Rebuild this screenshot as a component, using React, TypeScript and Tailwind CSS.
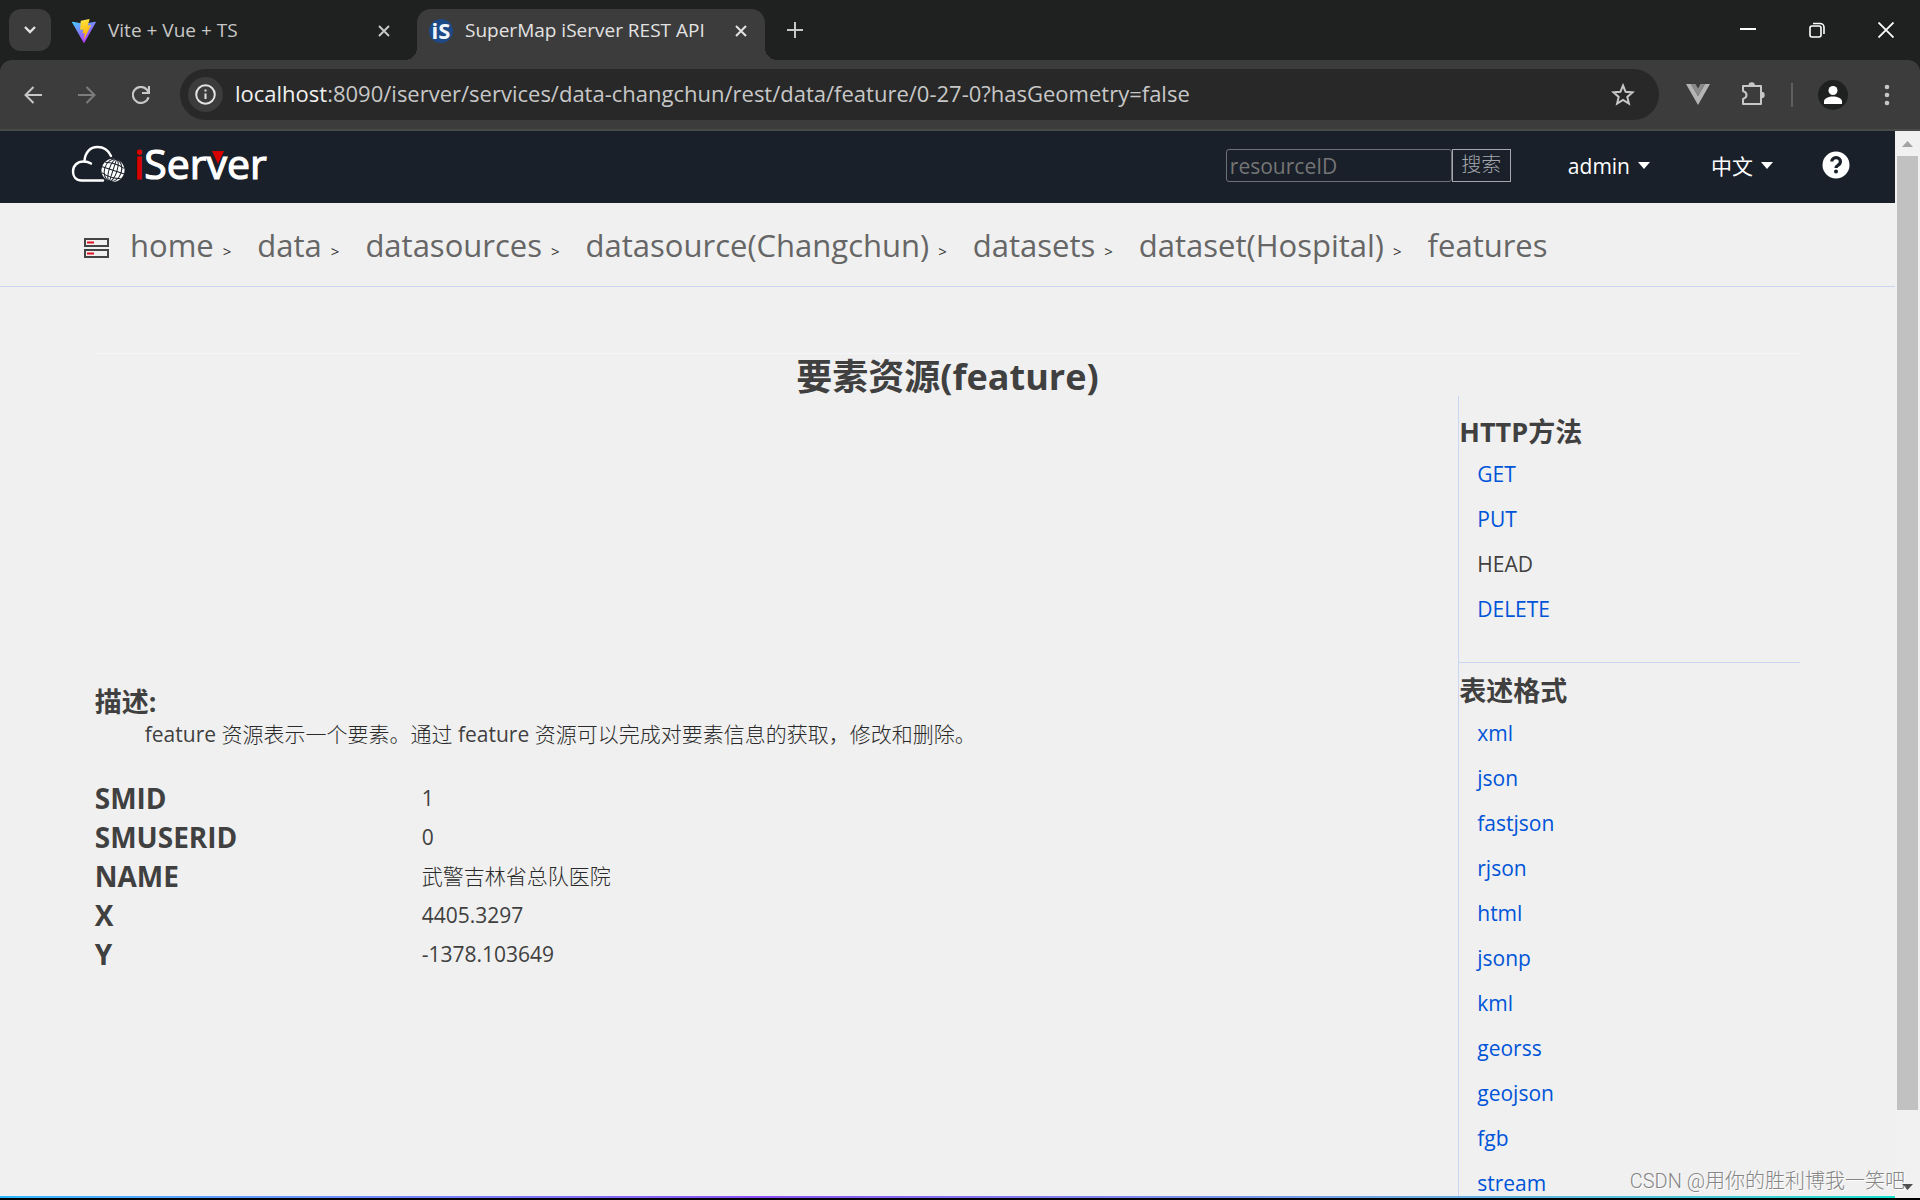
import React from 'react';

interface LinkItem {
  label: string;
  disabled?: boolean;
}

interface FieldItem {
  name: string;
  value: string;
  light?: boolean;
}

const crumbs = [
  'home',
  'data',
  'datasources',
  'datasource(Changchun)',
  'datasets',
  'dataset(Hospital)',
  'features',
];

const methods: LinkItem[] = [
  { label: 'GET' },
  { label: 'PUT' },
  { label: 'HEAD', disabled: true },
  { label: 'DELETE' },
];

const formats: LinkItem[] = [
  { label: 'xml' },
  { label: 'json' },
  { label: 'fastjson' },
  { label: 'rjson' },
  { label: 'html' },
  { label: 'jsonp' },
  { label: 'kml' },
  { label: 'georss' },
  { label: 'geojson' },
  { label: 'fgb' },
  { label: 'stream' },
];

const fields: FieldItem[] = [
  { name: 'SMID', value: '1' },
  { name: 'SMUSERID', value: '0' },
  { name: 'NAME', value: '武警吉林省总队医院', light: true },
  { name: 'X', value: '4405.3297' },
  { name: 'Y', value: '-1378.103649' },
];

const CloseIcon: React.FC = () => (
  <svg className="w-3 h-3" viewBox="0 0 12 12" fill="none" stroke="currentColor" strokeWidth="2">
    <path d="M1 1l10 10M11 1L1 11" />
  </svg>
);

const ViteIcon: React.FC = () => (
  <svg className="w-6 h-6 shrink-0" viewBox="0 0 24 24">
    <defs>
      <linearGradient id="viteBody" x1="0" y1="0" x2="0.6" y2="1">
        <stop offset="0" stopColor="#41d1ff" />
        <stop offset="1" stopColor="#bd34fe" />
      </linearGradient>
      <linearGradient id="viteBolt" x1="0.4" y1="0" x2="0.6" y2="1">
        <stop offset="0" stopColor="#ffea83" />
        <stop offset="0.1" stopColor="#ffdd35" />
        <stop offset="1" stopColor="#ffa800" />
      </linearGradient>
    </defs>
    <path d="M23.8 3.6L12.5 23.6a.6.6 0 0 1-1 0L.1 3.6a.6.6 0 0 1 .6-.9L12 4.7l11.2-2a.6.6 0 0 1 .6.9z" fill="url(#viteBody)" />
    <path d="M17.3.1L9 1.7a.3.3 0 0 0-.3.3l-.5 8.6c0 .2.2.4.4.3l2.3-.5c.2 0 .4.2.4.4l-.7 3.3c0 .3.2.5.4.4l1.4-.4c.3-.1.5.1.4.4l-1.1 5.2c-.1.4.4.5.5.2l.1-.2L19 6.4c.1-.2-.1-.5-.4-.4l-2.4.4c-.2.1-.4-.2-.3-.4l1.7-5.5c0-.2-.1-.4-.3-.4z" fill="url(#viteBolt)" />
  </svg>
);

const SuperMapIcon: React.FC = () => (
  <svg className="w-6 h-6 shrink-0 overflow-visible" viewBox="0 0 24 24">
    <circle cx="12" cy="12" r="12" fill="#1d4a86" />
    <text x="12" y="20" textAnchor="middle" fill="#f2f6fb" className="font-bold text-[22px]">
      iS
    </text>
  </svg>
);

const Logo: React.FC = () => (
  <svg className="w-[200px] h-[44px] overflow-visible" viewBox="0 0 200 44" role="img" aria-label="iServer">
    <g fill="none" stroke="#fff" strokeWidth="2.4" strokeLinecap="round">
      <path d="M33 39.5H11.5C6 39.5 3 35.5 3 30.5c0-6 4.5-10 10.5-10 3 0 5.5.7 7.5 2" />
      <path d="M14.5 20C15 11.5 20 6 27.5 6c6.500 0 11 3.5 13.500 9" />
    </g>
    <circle cx="43" cy="29.3" r="11.5" fill="#fff" />
    <g fill="none" stroke="#1a202a" strokeWidth="1" transform="rotate(18 43 29.3)">
      <ellipse cx="43" cy="29.3" rx="4" ry="11.5" />
      <ellipse cx="43" cy="29.3" rx="8.5" ry="11.5" />
      <path d="M43 18v23M31 29.3h24M33 24q10-3 20 0M33 35q10 3 20 0" />
    </g>
    <text x="64" y="38" className="text-[41px]" fill="#fff" stroke="#fff" strokeWidth="1.2">
      <tspan fill="#d90000" stroke="#d90000">i</tspan>Server
    </text>
    <path d="M142 10h12l-6 13z" fill="#d90000" />
  </svg>
);

const Caret: React.FC = () => (
  <svg className="w-3 h-[7px] mb-1" viewBox="0 0 12 7" fill="currentColor">
    <path d="M0 0h12L6 7z" />
  </svg>
);

const TabStrip: React.FC = () => (
  <div className="flex h-[60px] items-end bg-[#1f2120] text-[19px] text-[#c7c7c7]">
    <button
      aria-label="Search tabs"
      className="ml-[9px] mb-[9px] flex h-[42px] w-[42px] items-center justify-center rounded-xl bg-[#3c3c3c] text-[#e3e3e3]"
    >
      <svg className="w-3 h-2" viewBox="0 0 12 8" fill="none" stroke="currentColor" strokeWidth="2.4">
        <path d="M1 1l5 5 5-5" />
      </svg>
    </button>
    <div className="flex h-[51px] w-[366px] items-center gap-3 pb-2 pl-[21px] pr-[27px]">
      <ViteIcon />
      <span className="flex-1">Vite + Vue + TS</span>
      <button aria-label="Close tab">
        <CloseIcon />
      </button>
    </div>
    <div className="relative flex h-[51px] w-[348px] items-center gap-3 rounded-t-[14px] bg-[#3c3c3c] pb-2 pl-3 pr-[18px] text-[#e3e3e3]">
      {/* Curvas exteriores de la pestaña activa */}
      <span className="absolute -left-3 bottom-0 h-3 w-3 bg-[radial-gradient(circle_at_0_0,#1f2120_12px,#3c3c3c_12px)]" />
      <span className="absolute -right-3 bottom-0 h-3 w-3 bg-[radial-gradient(circle_at_100%_0,#1f2120_12px,#3c3c3c_12px)]" />
      <SuperMapIcon />
      <span className="flex-1 whitespace-nowrap">SuperMap iServer REST API</span>
      <button aria-label="Close tab">
        <CloseIcon />
      </button>
    </div>
    <button aria-label="New tab" className="mb-[22px] ml-[22px]">
      <svg className="w-4 h-4" viewBox="0 0 16 16" stroke="currentColor" strokeWidth="2">
        <path d="M8 0v16M0 8h16" />
      </svg>
    </button>
    <div className="mb-[22px] ml-auto mr-[26px] flex items-center gap-[53px] text-white">
      <button aria-label="Minimize">
        <svg className="w-4 h-4" viewBox="0 0 16 16" stroke="currentColor" strokeWidth="2">
          <path d="M0 7h16" />
        </svg>
      </button>
      <button aria-label="Restore">
        <svg className="w-4 h-4" viewBox="0 0 16 16" fill="none" stroke="currentColor" strokeWidth="1.6">
          <rect x="1" y="4" width="11" height="11" rx="2" />
          <path d="M4 1.5h7a4 4 0 0 1 4 4V12" />
        </svg>
      </button>
      <button aria-label="Close">
        <svg className="w-4 h-4" viewBox="0 0 16 16" stroke="currentColor" strokeWidth="1.8">
          <path d="M.5.5l15 15M15.5.5l-15 15" />
        </svg>
      </button>
    </div>
  </div>
);

const Toolbar: React.FC = () => (
  <div className="bg-[#1f2120]">
    <div className="flex h-[71px] items-center rounded-t-xl border-b-2 border-[#474a47] bg-[#3c3c3c] pl-6 pr-[30px] text-[#c7c7c7]">
      <div className="flex w-[156px] items-center gap-9">
        <button aria-label="Back">
          <svg className="w-[18px] h-[18px]" viewBox="0 0 18 18" fill="none" stroke="currentColor" strokeWidth="2">
            <path d="M18 9H1.5M9.5 1L1.5 9l8 8" />
          </svg>
        </button>
        <button aria-label="Forward" className="text-[#7c7c7c]">
          <svg className="w-[18px] h-[18px]" viewBox="0 0 18 18" fill="none" stroke="currentColor" strokeWidth="2">
            <path d="M0 9h16.5M8.5 1l8 8-8 8" />
          </svg>
        </button>
        <button aria-label="Reload">
          <svg className="w-[18px] h-[18px]" viewBox="0 0 18 18" fill="none" stroke="currentColor" strokeWidth="2.2">
            <path d="M16.5 11.2A8 8 0 1 1 15 3.8l1.5 2" />
            <path d="M17 0v7h-7" />
          </svg>
        </button>
      </div>
      <div className="flex h-[51px] flex-1 items-center rounded-full bg-[#282828] pl-2 pr-6">
        <button aria-label="Site information" className="flex h-[35px] w-[35px] items-center justify-center rounded-full bg-[#3c3c3c] text-[#e3e3e3]">
          <svg className="w-[21px] h-[21px]" viewBox="0 0 21 21" fill="none" stroke="currentColor" strokeWidth="2">
            <circle cx="10.5" cy="10.5" r="9.3" />
            <path d="M10.5 9.5V15M10.5 5.5v2" />
          </svg>
        </button>
        <div className="ml-3 flex-1 whitespace-nowrap pb-[2px] text-[22px]">
          <span className="text-[#f0f0f0]">localhost</span>
          :8090/iserver/services/data-changchun/rest/data/feature/0-27-0?hasGeometry=false
        </div>
        <button aria-label="Bookmark">
          <svg className="w-6 h-6" viewBox="0 0 24 24" fill="none" stroke="currentColor" strokeWidth="2">
            <path d="M12 2.5l2.6 6.3 6.9.6-5.2 4.5 1.6 6.7L12 17l-5.9 3.6 1.6-6.7L2.5 9.4l6.9-.6z" />
          </svg>
        </button>
      </div>
      <div className="ml-[27px] flex items-center">
        <svg className="w-6 h-[21px]" viewBox="0 0 24 21">
          <path d="M0 0h5l7 12 7-12h5L12 21z" fill="#b4b4b4" />
          <path d="M5 0h4.5L12 4.5 14.5 0H19l-7 12z" fill="#8a8a8a" />
        </svg>
        <button aria-label="Extensions" className="mb-[2px] ml-[31px]">
          <svg className="w-6 h-6" viewBox="0 0 24 24" fill="none" stroke="currentColor" strokeWidth="2" strokeLinejoin="round">
            <path d="M2 4h18v18H2v-5q3.5-1.2 3.5-4T2 9z" />
            <path d="M7.5 3.500a3.200 3.200 0 0 1 6.400 0zM20.500 9.800a3.200 3.200 0 0 1 0 6.400z" fill="currentColor" stroke="none" />
          </svg>
        </button>
        <span className="ml-[26px] h-6 w-[2px] bg-[#5f5f5f]" />
        <button aria-label="Profile" className="ml-[25px] flex h-[30px] w-[30px] items-center justify-center rounded-full bg-[#1f2120] text-white">
          <svg className="w-[18px] h-[18px]" viewBox="0 0 18 18" fill="currentColor">
            <circle cx="9" cy="4.5" r="4.5" />
            <path d="M0 18v-2.5C0 12 5 10.5 9 10.5s9 1.5 9 5V18z" />
          </svg>
        </button>
        <button aria-label="Menu" className="ml-9">
          <svg className="w-[6px] h-[22px]" viewBox="0 0 6 22" fill="currentColor">
            <circle cx="3" cy="3" r="2.3" />
            <circle cx="3" cy="11" r="2.3" />
            <circle cx="3" cy="19" r="2.3" />
          </svg>
        </button>
      </div>
    </div>
  </div>
);

const PageHeader: React.FC = () => (
  <header className="flex h-[72px] items-center bg-[#1a202a] pl-[70px] pr-[45px] text-[21px] text-white">
    <a href="#" className="mb-2">
      <Logo />
    </a>
    <form className="mb-1 ml-auto flex h-[33px]" onSubmit={(e) => e.preventDefault()}>
      <input
        type="text"
        aria-label="resourceID"
        placeholder="resourceID"
        className="w-[226px] rounded-[3px] border border-[#6d7178] bg-transparent px-[3px] pt-1 placeholder:text-[#757575]"
      />
      <button type="submit" className="w-[59px] border border-[#a4a7ad] text-[20px] leading-none font-light text-[#a4a7ad]">
        搜索
      </button>
    </form>
    <button className="ml-[57px] flex items-center gap-2">
      admin <Caret />
    </button>
    <button className="ml-[61px] flex items-center gap-2">
      中文 <Caret />
    </button>
    <button aria-label="Help" className="mb-1 ml-[49px]">
      <svg className="w-7 h-7" viewBox="0 0 28 28">
        <circle cx="14" cy="14" r="13.5" fill="#fff" />
        <path d="M9.8 10.5a4.3 4 0 1 1 6.5 3.500c-1.600 1-2.300 1.500-2.300 3" fill="none" stroke="#1a202a" strokeWidth="3.2" />
        <circle cx="14" cy="20.5" r="2" fill="#1a202a" />
      </svg>
    </button>
  </header>
);

const Breadcrumb: React.FC = () => (
  <nav className="flex h-[84px] items-center border-b border-[#c8d6f2] pt-[2px] pl-[84px] text-[31px] text-[#666]">
    <svg className="w-[25px] h-5 mt-1 mr-[21px]" viewBox="0 0 25 20" fill="none">
      <rect x="1" y="1" width="23" height="7" stroke="#444" strokeWidth="2" />
      <rect x="1" y="12" width="23" height="7" stroke="#444" strokeWidth="2" />
      <path d="M3 4.5h7M3 15.5h7" stroke="#e01020" strokeWidth="2" />
    </svg>
    {crumbs.map((crumb, i) => (
      <span key={crumb} className="flex items-baseline">
        <a href="#">{crumb}</a>
        {i < crumbs.length - 1 && <span className="ml-[9px] mr-[26px] text-[15px] text-[#333]">&gt;</span>}
      </span>
    ))}
  </nav>
);

const LinkList: React.FC<{ items: LinkItem[] }> = ({ items }) => (
  <ul className="pt-[2px] pl-[18px] text-[21px] leading-[45px] text-[#0054d8]">
    {items.map((item) => (
      <li key={item.label}>
        {item.disabled ? <span className="text-[#404040]">{item.label}</span> : <a href="#">{item.label}</a>}
      </li>
    ))}
  </ul>
);

const Scrollbar: React.FC = () => (
  <div className="flex w-[25px] flex-col items-center justify-between bg-[#f1f1f1]">
    <svg className="mt-[10px] mb-[9px] w-[11px] h-[6px]" viewBox="0 0 11 6" fill="#a3a3a3">
      <path d="M0 6h11L5.5 0z" />
    </svg>
    <div className="mb-[74px] w-[21px] flex-1 bg-[#c1c1c1]" />
    <svg className="mb-2 w-[11px] h-[6px]" viewBox="0 0 11 6" fill="#505050">
      <path d="M0 0h11L5.5 6z" />
    </svg>
  </div>
);

const App: React.FC = () => {
  return (
    <div className="relative flex h-screen flex-col overflow-hidden border-b-2 border-black bg-[#f0f0f0] font-['Open_Sans','Noto_Sans_CJK_SC',sans-serif]">
      <TabStrip />
      <Toolbar />

      <div className="flex min-h-0 flex-1">
        <div className="flex min-w-0 flex-1 flex-col">
          <div className="min-h-0 flex-1 overflow-hidden text-[#404040]">
            <PageHeader />
            <Breadcrumb />

            <main className="mx-auto mt-[66px] w-[90%] border-t border-[#f5f6f8]">
              <h1 className="pt-1 text-center text-[36px] leading-[38px] font-bold">要素资源(feature)</h1>
              <div className="flex">
                {/* Descripción y atributos */}
                <section className="min-w-0 flex-1 pt-[288px] text-[21px]">
                  <h2 className="text-[27px] leading-9 font-bold">描述:</h2>
                  <p className="pl-[50px] leading-7">
                    feature <span className="font-light text-[#2a2a2a]">资源表示一个要素。通过</span> feature{' '}
                    <span className="font-light text-[#2a2a2a]">资源可以完成对要素信息的获取，修改和删除。</span>
                  </p>
                  <table className="mt-[31px] text-left">
                    <tbody>
                      {fields.map((field) => (
                        <tr key={field.name}>
                          <th className="w-[327px] text-[28px] leading-[39px] font-bold">{field.name}</th>
                          <td className={field.light ? 'leading-[39px] font-light text-[#2a2a2a]' : 'leading-[39px]'}>
                            {field.value}
                          </td>
                        </tr>
                      ))}
                    </tbody>
                  </table>
                </section>

                {/* Métodos y formatos */}
                <aside className="w-[342px] border-l border-[#c8d6f2]">
                  <h2 className="pt-[18px] text-[27px] leading-9 font-bold">HTTP方法</h2>
                  <LinkList items={methods} />
                  <hr className="mt-[30px] border-[#c8d6f2]" />
                  <h2 className="pt-[10px] text-[27px] leading-9 font-bold">表述格式</h2>
                  <LinkList items={formats} />
                </aside>
              </div>
            </main>
          </div>
          <div className="h-[2px] shrink-0 bg-linear-to-r from-[#29b9ff] via-[#8a4ff5] via-40% to-[#14e0d0]" />
        </div>
        <Scrollbar />
      </div>

      <span className="absolute right-[15px] bottom-[3px] text-[20px] leading-7 font-light text-[#858585] font-['Roboto','Noto_Sans_CJK_SC',sans-serif] [text-shadow:1px_1px_0_#fff]">
        CSDN @用你的胜利博我一笑吧
      </span>
    </div>
  );
};

export default App;
